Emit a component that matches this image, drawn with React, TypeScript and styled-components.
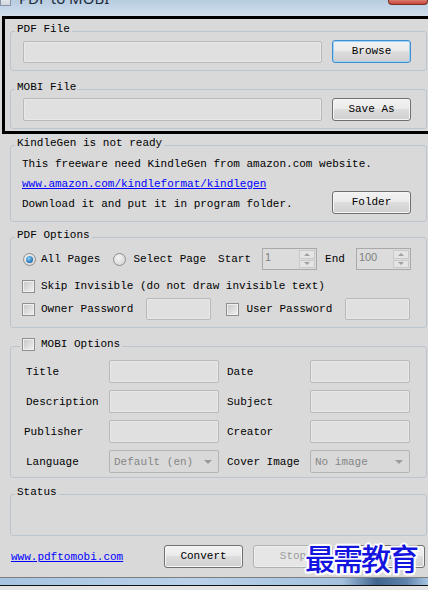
import React from "react";
import styled, { createGlobalStyle } from "styled-components";

const mono = `"Liberation Mono", "DejaVu Sans Mono", monospace`;

const GlobalStyle = createGlobalStyle`
  html, body {
    margin: 0;
    padding: 0;
    background: #d9d9d9;
    overflow: hidden;
  }
`;

const Page = styled.div`
  position: relative;
  width: 428px;
  height: 590px;
  overflow: hidden;
  background: #d9d9d9;
  font-family: ${mono};
  font-size: 11px;
  color: #000;
  display: flex;
  flex-direction: column;
`;

// Title bar (cut off at the top of the shot)
const TitleBar = styled.div`
  flex: none;
  height: 16px;
  display: flex;
  align-items: flex-start;
  overflow: hidden;
  background: linear-gradient(to bottom, #b8cce0 0%, #c6d7e8 60%, #d3e0ec 100%);
`;

const WinIcon = styled.div`
  width: 9px;
  height: 13px;
  margin: -9px 0 0 0;
  border: 1px solid #8796a8;
  background: linear-gradient(to bottom, #ffffff, #cfd6de);
`;

const TitleText = styled.div`
  margin: -10px 0 0 8px;
  font: 15px/16px "Noto Sans", "Open Sans", sans-serif;
  color: #1c2b3c;
`;

const CloseTab = styled.div`
  margin-left: auto;
  width: 38px;
  height: 4px;
  border: 1px solid #7a2f28;
  border-top: none;
  border-radius: 0 0 4px 4px;
  background: linear-gradient(to bottom, #d9796c, #c4473a);
`;

const Window = styled.div`
  flex: 1;
  display: flex;
  flex-direction: column;
  padding-left: 10px;
`;

// black marker drawn around the file groups
const Highlight = styled.div`
  margin-left: -8px;
  width: max-content;
  border: 3px solid #000;
  padding: 0 3px 2px 5px;
  display: flex;
  flex-direction: column;
`;

const Group = styled.fieldset<{ $mt: number; $pt?: number; $pb: number }>`
  box-sizing: border-box;
  width: 417px;
  min-width: 0;
  margin: ${(p) => p.$mt}px 0 0;
  padding: ${(p) => p.$pt ?? 1}px 15px ${(p) => p.$pb}px 12px;
  border: 1px solid #bcc5ce;
  border-radius: 3px;
`;

const Legend = styled.legend<{ $ml?: number }>`
  margin-left: ${(p) => p.$ml ?? -8}px;
  padding: 0 2px 3px;
  font: 11px/13px ${mono};
  display: flex;
  align-items: center;
  gap: 6px;
`;

const FieldRow = styled.div`
  display: flex;
  align-items: center;
  gap: 10px;
  height: 23px;
`;

const TextBox = styled.div<{ $w?: number; $ml?: number; $h?: number }>`
  box-sizing: border-box;
  flex: ${(p) => (p.$w ? "none" : "1")};
  width: ${(p) => (p.$w ? `${p.$w}px` : "auto")};
  height: ${(p) => p.$h ?? 22}px;
  margin-left: ${(p) => p.$ml ?? 0}px;
  border: 1px solid #b9b9b9;
  border-radius: 2px;
  background: #e0e0e0;
  box-shadow: inset 0 0 0 1px #e8e8e8;
`;

const Button = styled.button<{ $w: number; $focus?: boolean; $ml?: number }>`
  box-sizing: border-box;
  flex: none;
  width: ${(p) => p.$w}px;
  height: 23px;
  margin: 0 0 0 ${(p) => p.$ml ?? 0}px;
  padding: 0;
  font: 11px/1 ${mono};
  color: #000;
  border: 1px solid ${(p) => (p.$focus ? "#3c8fd0" : "#707070")};
  border-radius: 3px;
  background: linear-gradient(to bottom, #f2f2f2 0%, #ebebeb 45%, #dddddd 50%, #cfcfcf 100%);
  box-shadow: inset 0 0 0 1px ${(p) => (p.$focus ? "#9fd2f2" : "#f6f6f6")};

  &:disabled {
    color: #9a9a9a;
    border-color: #adb2b5;
    background: #e6e6e6;
    box-shadow: inset 0 0 0 1px #eeeeee;
  }
`;

const InfoGrid = styled.div`
  display: grid;
  grid-template-columns: minmax(0, 1fr) auto;
  align-items: end;
`;

const InfoText = styled.div`
  margin-left: -1px;
  line-height: 20px;
  white-space: nowrap;
`;

const Link = styled.a`
  color: #0000ff;
  text-decoration: underline;
  cursor: pointer;
`;

const OptRow = styled.div<{ $mt: number; $h: number }>`
  display: flex;
  align-items: center;
  height: ${(p) => p.$h}px;
  margin-top: ${(p) => p.$mt}px;
  white-space: nowrap;
`;

const Radio = styled.span<{ $on?: boolean; $ml?: number }>`
  box-sizing: border-box;
  flex: none;
  width: 13px;
  height: 13px;
  margin-left: ${(p) => p.$ml ?? 0}px;
  border-radius: 50%;
  border: 1px solid #8e8f8f;
  display: flex;
  align-items: center;
  justify-content: center;
  background: radial-gradient(circle at 40% 35%, #f4f4f4, #cfcfcf);

  &::after {
    content: "";
    display: ${(p) => (p.$on ? "block" : "none")};
    width: 7px;
    height: 7px;
    border-radius: 50%;
    background: radial-gradient(circle at 40% 35%, #8fd3f7, #1f6fb2 70%, #174f86);
  }
`;

const Check = styled.span<{ $ml?: number }>`
  box-sizing: border-box;
  flex: none;
  width: 13px;
  height: 13px;
  margin-left: ${(p) => p.$ml ?? 0}px;
  border: 1px solid #8e8f8f;
  background: linear-gradient(135deg, #c6c6c6, #f2f2f2);
  box-shadow: inset 0 0 0 1px #f0f0f0;
`;

const Label = styled.span<{ $ml?: number }>`
  margin-left: ${(p) => p.$ml ?? 0}px;
  line-height: 13px;
`;

const SpinBox = styled.div<{ $ml: number }>`
  box-sizing: border-box;
  flex: none;
  display: flex;
  width: 55px;
  height: 22px;
  margin-left: ${(p) => p.$ml}px;
  border: 1px solid #a9a9a9;
  background: #dcdcdc;
`;

const SpinValue = styled.span`
  flex: 1;
  padding: 1px 2px;
  font: 11px/15px "Liberation Sans", Arial, sans-serif;
  color: #808080;
`;

const SpinArrows = styled.div`
  width: 16px;
  display: flex;
  flex-direction: column;
  gap: 1px;
  padding: 1px;
`;

const SpinHalf = styled.div<{ $down?: boolean }>`
  flex: 1;
  display: flex;
  align-items: center;
  justify-content: center;
  border: 1px solid #c9c9c9;
  background: #e4e4e4;

  &::after {
    content: "";
    width: 0;
    height: 0;
    border-left: 3px solid transparent;
    border-right: 3px solid transparent;
    ${(p) => (p.$down ? "border-top: 3px solid #a0a0a0;" : "border-bottom: 3px solid #a0a0a0;")}
  }
`;

const MetaGrid = styled.div`
  display: grid;
  grid-template-columns: 83px 110px 91px 100px;
  grid-auto-rows: 23px;
  row-gap: 7px;
  align-items: center;
  margin-left: 3px;
`;

const MetaLabel = styled.span<{ $ml?: number }>`
  margin-left: ${(p) => p.$ml ?? 0}px;
  white-space: nowrap;
`;

const Select = styled.div`
  box-sizing: border-box;
  height: 23px;
  display: flex;
  align-items: center;
  justify-content: space-between;
  padding: 0 6px 0 4px;
  border: 1px solid #b4b4b4;
  border-radius: 2px;
  color: #868686;

  &::after {
    content: "";
    border-left: 4px solid transparent;
    border-right: 4px solid transparent;
    border-top: 4px solid #9c9c9c;
  }
`;

const StatusArea = styled.div`
  height: 33px;
`;

const Footer = styled.div`
  display: flex;
  align-items: center;
  width: 417px;
  height: 23px;
  margin-top: 9px;
  padding-right: 2px;
  box-sizing: border-box;
`;

const FooterLink = styled(Link)`
  margin-left: 1px;
  margin-right: auto;
`;

const BottomFrame = styled.div`
  flex: none;
  height: 7px;
  border-top: 1px solid #7d7d7d;
  border-bottom: 1px solid #111;
  background: linear-gradient(to right, #a6c4e2 0%, #b9d1e9 45%, #a3c1df 80%, #3f648e 88%, #5d83ad 95%, #a6c4e2 100%);
`;

const BottomStrip = styled.div`
  flex: none;
  height: 4px;
  background: #e4e4e4;
`;

const Watermark = styled.div`
  position: absolute;
  left: 305px;
  top: 540px;
  font: 500 30px/34px "Noto Sans CJK SC", sans-serif;
  letter-spacing: -2px;
  color: #1414e0;
  text-shadow: 2px 0 #fff, -2px 0 #fff, 0 2px #fff, 0 -2px #fff, 1.5px 1.5px #fff,
    -1.5px -1.5px #fff, 1.5px -1.5px #fff, -1.5px 1.5px #fff;
  pointer-events: none;
`;

const Spin = ({ value, ml }: { value: string; ml: number }) => (
  <SpinBox $ml={ml}>
    <SpinValue>{value}</SpinValue>
    <SpinArrows>
      <SpinHalf />
      <SpinHalf $down />
    </SpinArrows>
  </SpinBox>
);

const metaRows = [
  ["Title", "Date", 0],
  ["Description", "Subject", 0],
  ["Publisher", "Creator", -2],
];

export default function App() {
  return (
    <Page>
      <GlobalStyle />
      <TitleBar>
        <WinIcon />
        <TitleText>PDF to MOBI</TitleText>
        <CloseTab />
      </TitleBar>

      <Window>
        <Highlight>
          <Group $mt={4} $pb={7}>
            <Legend>PDF File</Legend>
            <FieldRow>
              <TextBox />
              <Button $w={79} $focus>
                Browse
              </Button>
            </FieldRow>
          </Group>
          <Group $mt={10} $pb={7}>
            <Legend>MOBI File</Legend>
            <FieldRow>
              <TextBox $h={23} />
              <Button $w={79}>Save As</Button>
            </FieldRow>
          </Group>
        </Highlight>

        <Group $mt={3} $pb={7}>
          <Legend>KindleGen is not ready</Legend>
          <InfoGrid>
            <div>
              <InfoText>This freeware need KindleGen from amazon.com website.</InfoText>
              <InfoText>
                <Link>www.amazon.com/kindleformat/kindlegen</Link>
              </InfoText>
              <InfoText>Download it and put it in program folder.</InfoText>
            </div>
            <Button $w={79}>Folder</Button>
          </InfoGrid>
        </Group>

        <Group $mt={7} $pt={0} $pb={6}>
          <Legend>PDF Options</Legend>
          <OptRow $mt={2} $h={24}>
            <Radio $on />
            <Label $ml={5}>All Pages</Label>
            <Radio $ml={13} />
            <Label $ml={7}>Select Page</Label>
            <Label $ml={12}>Start</Label>
            <Spin value="1" ml={11} />
            <Label $ml={8}>End</Label>
            <Spin value="100" ml={11} />
          </OptRow>
          <OptRow $mt={4} $h={22}>
            <Check $ml={-1} />
            <Label $ml={6}>Skip Invisible (do not draw invisible text)</Label>
          </OptRow>
          <OptRow $mt={0} $h={24}>
            <Check $ml={-1} />
            <Label $ml={6}>Owner Password</Label>
            <TextBox $w={65} $ml={13} />
            <Check $ml={15} />
            <Label $ml={7}>User Password</Label>
            <TextBox $w={65} $ml={13} />
          </OptRow>
        </Group>

        <Group $mt={10} $pt={6} $pb={4}>
          <Legend $ml={-3}>
            <Check />
            MOBI Options
          </Legend>
          <MetaGrid>
            {metaRows.map(([left, right, shift]) => (
              <React.Fragment key={left as string}>
                <MetaLabel $ml={shift as number}>{left}</MetaLabel>
                <TextBox $h={23} />
                <MetaLabel $ml={8}>{right}</MetaLabel>
                <TextBox $h={23} />
              </React.Fragment>
            ))}
            <MetaLabel>Language</MetaLabel>
            <Select>Default (en)</Select>
            <MetaLabel $ml={8}>Cover Image</MetaLabel>
            <Select>No image</Select>
          </MetaGrid>
        </Group>

        <Group $mt={8} $pt={0} $pb={0}>
          <Legend>Status</Legend>
          <StatusArea />
        </Group>

        <Footer>
          <FooterLink>www.pdftomobi.com</FooterLink>
          <Button $w={79}>Convert</Button>
          <Button $w={80} $ml={10} disabled>
            Stop
          </Button>
          <Button $w={87} $ml={5}>
            About
          </Button>
        </Footer>
      </Window>

      <BottomFrame />
      <BottomStrip />
      <Watermark>最需教育</Watermark>
    </Page>
  );
}
